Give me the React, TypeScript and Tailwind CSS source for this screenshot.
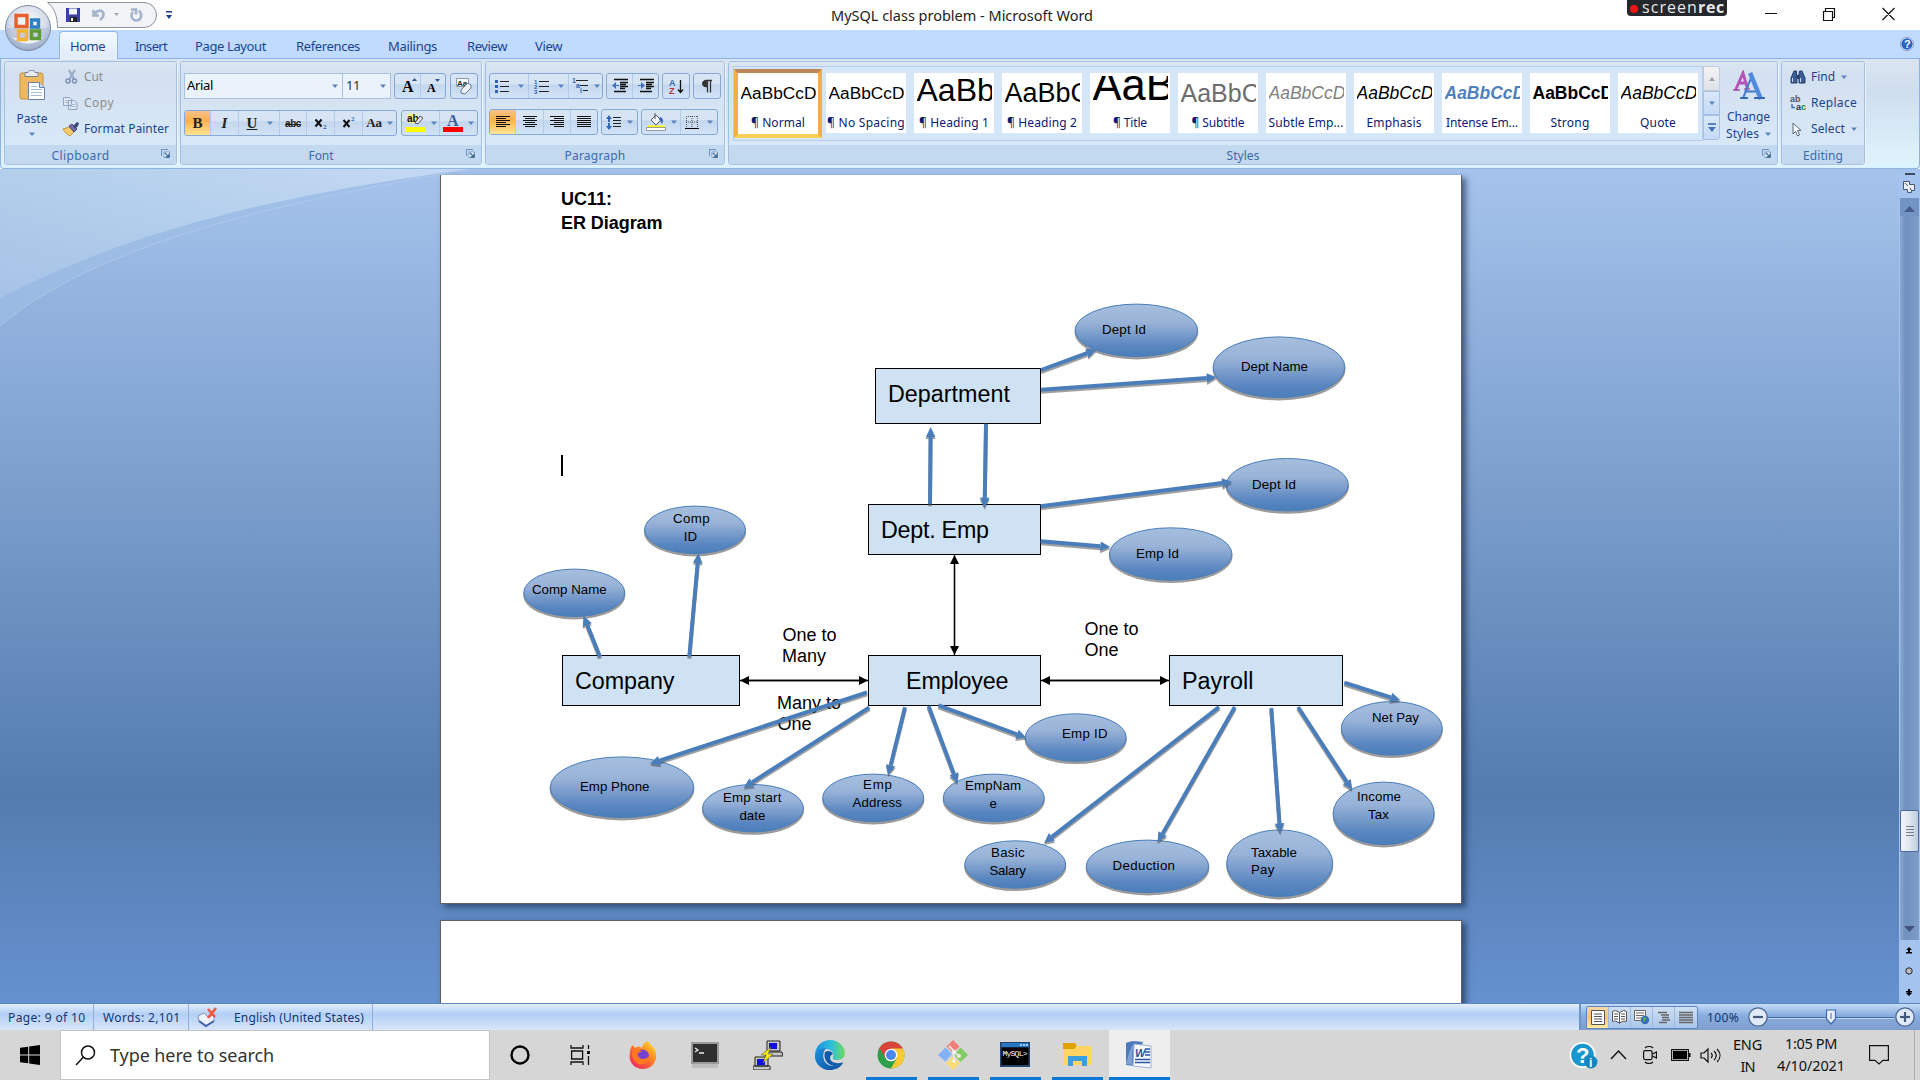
import React, { useLayoutEffect, useRef, useState } from "react";

/* Text whose tracking is tuned so that it takes the given width. */
function Fit({ w, children, className = "" }: { w: number; children: string; className?: string }) {
  const ref = useRef<HTMLSpanElement>(null);
  const [ls, setLs] = useState(0);
  useLayoutEffect(() => {
    const el = ref.current;
    if (el) setLs((w - el.getBoundingClientRect().width) / children.length);
  }, []);
  return (
    <span ref={ref} className={"inline-block whitespace-pre " + className} style={{ letterSpacing: ls + "px" }}>
      {children}
    </span>
  );
}

const Caret = ({ className = "" }: { className?: string }) => (
  <svg className={"shrink-0 " + className} width="6" height="4" viewBox="0 0 6 4">
    <path d="M0 0.5h6L3 4z" fill="#5a84bd" />
  </svg>
);

const Launcher = () => (
  <svg width="9" height="9" viewBox="0 0 9 9" fill="none">
    <path d="M0.5 7V0.5H7" stroke="#6a8fc0" />
    <path d="M3 3h5.5v5.5H3z" fill="#fff" stroke="#7f9fc9" />
    <path d="M4 4l4 4M8 4.500V8H4.500" stroke="#3d6797" strokeWidth="1.300" />
  </svg>
);

function Group({ label, lw, className, launcher, children }: { label: string; lw: number; className: string; launcher?: boolean; children: React.ReactNode }) {
  return (
    <div className={"flex h-[104px] shrink-0 flex-col overflow-hidden rounded-[3px] border border-[#a3c0e0] shadow-[1px_1px_0_#eef5fc] " + className}>
      <div className="h-[84px] bg-gradient-to-b from-[#dce6f2] from-0% via-[#d3e0ef] via-15% to-[#d8e8f8]">{children}</div>
      <div className={"relative flex h-[19px] items-center justify-center bg-[#c2d9f0] pt-[3px] text-[12px] leading-none text-[#3e6aaa] " + (launcher ? "pr-[20px]" : "")}>
        <Fit w={lw}>{label}</Fit>
        {launcher && <div className="absolute top-[4px] right-[6px]"><Launcher /></div>}
      </div>
    </div>
  );
}

const Bar = ({ className, children }: { className: string; children: React.ReactNode }) => (
  <div className={"flex h-[26px] shrink-0 divide-x divide-[#b2cbea] overflow-hidden rounded-[3px] border border-[#86a9d6] bg-gradient-to-b from-[#d6e4f4] from-40% via-[#c4d7ee] via-45% to-[#d2e3f6] " + className}>
    {children}
  </div>
);
const Cell = ({ className, children }: { className: string; children: React.ReactNode }) => (
  <div className={"flex shrink-0 items-center justify-center gap-[5px] text-[#222] " + className}>{children}</div>
);

const Lines = ({ rows }: { rows: [number, number][] }) => (
  <svg width="16" height="15" viewBox="0 0 16 15">
    {rows.map(([a, b], i) => <path key={i} d={`M${a} ${1.5 + i * 2}H${b}`} stroke="#111" strokeWidth="1" />)}
  </svg>
);

const FontGroup = () => (
  <div className="flex flex-col gap-[11px] pt-[11px] pl-[3px]">
    <div className="flex">
      <div className="flex h-[26px] w-[159px] items-center justify-between border border-[#abc1de] bg-[#eaf2fb] pr-[4px] pl-[2px] text-[13px] text-black">
        <Fit w={26}>Arial</Fit><Caret />
      </div>
      <div className="flex h-[26px] w-[48px] items-center justify-between border border-l-0 border-[#abc1de] bg-[#eaf2fb] pr-[4px] pl-[3px] text-[13px] text-[#333]">
        <Fit w={14}>11</Fit><Caret />
      </div>
      <Bar className="ml-[3px] w-[52px]">
        <Cell className="w-[26px]"><svg width="20" height="18" viewBox="0 0 20 18"><text x="4" y="15" fontFamily="Liberation Serif" fontWeight="bold" fontSize="16">A</text><path d="M14 4h5L16.500 1z" fill="#2d5797" /></svg></Cell>
        <Cell className="w-[24px]"><svg width="18" height="18" viewBox="0 0 18 18"><text x="3" y="15" fontFamily="Liberation Serif" fontWeight="bold" fontSize="12">A</text><path d="M11 2h5L13.500 5z" fill="#2d5797" /></svg></Cell>
      </Bar>
      <Bar className="ml-[4px] w-[28px]">
        <Cell className="w-[26px]"><svg width="20" height="19" viewBox="0 0 20 19"><path d="M2.500 1.500h12v8h-12z" fill="#fff" stroke="#8a99b0" /><text x="3" y="8.500" fontFamily="Liberation Sans" fontWeight="bold" fontSize="8" fill="#222">Aa</text><path d="M7 13l7-7 3 2v3l-6 6-4-1z" fill="#eceff5" stroke="#66789a" /></svg></Cell>
      </Bar>
    </div>
    <div className="flex font-['Liberation_Serif',serif] text-[15px] font-bold">
      <Bar className="w-[213px]">
        <Cell className="w-[26px] bg-gradient-to-b from-[#f6c08a] via-[#fcaf4e] via-40% to-[#ffe490]">B</Cell>
        <Cell className="w-[28px] italic">I</Cell>
        <Cell className="w-[41px]"><span className="mr-[5px] ml-[2px] underline">U</span><Caret /></Cell>
        <Cell className="w-[27px]"><span className="font-['Liberation_Sans',sans-serif] text-[10px] tracking-[-0.4px] line-through">abc</span></Cell>
        <Cell className="w-[28px]"><svg width="15" height="16" viewBox="0 0 15 16"><path d="M2.500 4.500l6 7M8.500 4.500l-6 7" stroke="#111" strokeWidth="2" /><text x="10" y="14" fontSize="7" fontWeight="bold" fill="#2c62b8">2</text></svg></Cell>
        <Cell className="w-[28px]"><svg width="15" height="16" viewBox="0 0 15 16"><path d="M2.500 5l6 7M8.500 5l-6 7" stroke="#111" strokeWidth="2" /><text x="10" y="6" fontSize="7" fontWeight="bold" fill="#2c62b8">2</text></svg></Cell>
        <Cell className="w-[33px]"><span className="text-[13px] tracking-[-0.3px]">Aa</span><Caret /></Cell>
      </Bar>
      <Bar className="ml-[4px] w-[77px]">
        <Cell className="w-[38px]"><svg width="22" height="20" viewBox="0 0 22 20"><path d="M3 1h10v9H3z" fill="#f4f08a" /><text x="3" y="9" fontFamily="Liberation Sans" fontSize="10" fill="#111">ab</text><path d="M11 10l5-7 3 2-5 6z" fill="#dde5f0" stroke="#556" /><path d="M1 14h20v5H1z" fill="#ff0" /></svg><Caret /></Cell>
        <Cell className="w-[37px]"><svg width="20" height="20" viewBox="0 0 20 20"><text x="4" y="12.500" fontFamily="Liberation Serif" fontWeight="bold" fontSize="16" fill="#3a5f9f">A</text><path d="M0 14h20v5H0z" fill="#f00" /></svg><Caret /></Cell>
      </Bar>
    </div>
  </div>
);

const Indent = ({ flip }: { flip?: boolean }) => (
  <svg width="18" height="16" viewBox="0 0 18 16">
    <path d="M3 1.500h14M9 4.500h8M9 6.500h6M9 8.500h8M9 10.500h5M3 13.500h12" stroke="#111" strokeWidth="1.500" />
    <path d={flip ? "M1 7h3V4l4 3.500L4 11V8H1z" : "M8 7H5V4L1 7.500 5 11V8h3z"} fill="#3f6fc0" />
  </svg>
);

const ParagraphGroup = () => (
  <div className="flex flex-col gap-[10px] pt-[11px] pl-[3px]">
    <div className="flex">
      <Bar className="w-[114px]">
        <Cell className="w-[39px] gap-[8px]"><svg width="15" height="15" viewBox="0 0 15 15"><path d="M5 2.500h9M5 7.500h9M5 12.500h9" stroke="#222" /><path d="M0 1h3v3H0zM0 6h3v3H0zM0 11h3v3H0z" fill="#2f62b4" /></svg><Caret /></Cell>
        <Cell className="w-[40px] gap-[9px]"><svg width="15" height="15" viewBox="0 0 15 15"><path d="M5 2.500h10M5 7.500h10M5 12.500h10" stroke="#222" /><text fontFamily="Liberation Sans" fontWeight="bold" fontSize="6" fill="#2f62b4"><tspan x="0" y="4.500">1</tspan><tspan x="0" y="10">2</tspan><tspan x="0" y="15">3</tspan></text></svg><Caret /></Cell>
        <Cell className="w-[33px]"><svg width="17" height="16" viewBox="0 0 17 16"><path d="M4 2.500h12M8 7.500h8M11 12.500h5" stroke="#222" /><text fontFamily="Liberation Sans" fontWeight="bold" fontSize="7" fill="#2f62b4"><tspan x="0" y="5">1</tspan><tspan x="4" y="10">a</tspan><tspan x="8" y="15">i</tspan></text></svg><Caret /></Cell>
      </Bar>
      <Bar className="ml-[3px] w-[53px]"><Cell className="w-[26px]"><Indent /></Cell><Cell className="w-[25px]"><Indent flip /></Cell></Bar>
      <Bar className="ml-[3px] w-[28px]"><Cell className="w-[26px]"><svg width="17" height="17" viewBox="0 0 17 17"><text fontFamily="Liberation Sans" fontWeight="bold" fontSize="9"><tspan x="1" y="8" fill="#3b6ab5">A</tspan><tspan x="1" y="16" fill="#b3393c">Z</tspan></text><path d="M12.500 2v12M10 11.500l2.500 3 2.500-3" stroke="#111" fill="none" strokeWidth="1.300" /></svg></Cell></Bar>
      <Bar className="ml-[3px] w-[28px]"><Cell className="w-[26px]"><svg width="12" height="15" viewBox="0 0 12 15"><path d="M11 1.500H5a3 3 0 0 0 0 6h1M6.500 1.500v12M9.500 1.500v12" stroke="#333" fill="none" strokeWidth="1.300" /><circle cx="4" cy="4.500" r="2.800" fill="#333" /></svg></Cell></Bar>
    </div>
    <div className="flex">
      <Bar className="w-[109px]">
        <Cell className="w-[26px] bg-gradient-to-b from-[#f6c08a] via-[#fcaf4e] via-40% to-[#ffe490]"><Lines rows={[[1, 15], [1, 11], [1, 15], [1, 11], [1, 15], [1, 11]]} /></Cell>
        <Cell className="w-[28px]"><Lines rows={[[1, 15], [3, 13], [1, 15], [3, 13], [1, 15], [3, 13]]} /></Cell>
        <Cell className="w-[27px]"><Lines rows={[[1, 15], [5, 15], [1, 15], [5, 15], [1, 15], [5, 15]]} /></Cell>
        <Cell className="w-[26px]"><Lines rows={[[1, 15], [1, 15], [1, 15], [1, 15], [1, 15], [1, 15]]} /></Cell>
      </Bar>
      <Bar className="ml-[3px] w-[37px]"><Cell className="w-[35px]"><svg width="16" height="17" viewBox="0 0 16 17"><path d="M7 3.500h8M7 6.500h8M7 9.500h8M7 12.500h8" stroke="#222" /><path d="M3 1L0 5h2v3h2V5h2zM3 16l3-4H4V9H2v3H0z" fill="#3565b5" /></svg><Caret /></Cell></Bar>
      <Bar className="ml-[3px] w-[77px]">
        <Cell className="w-[39px]"><svg width="20" height="19" viewBox="0 0 20 19"><path d="M5 7l5-5 5 5-5 5z" fill="#f4f6fa" stroke="#556" /><path d="M9 0v6" stroke="#556" /><path d="M14 4c3 1 4 4 2 7-1-2-1-3-3-4z" fill="#3565b5" /><path d="M2 12.500h17v1.500H2z" fill="#ff0" /><path d="M0.500 14.500h19v3h-19z" fill="#fff" stroke="#9a9a9a" /></svg><Caret /></Cell>
        <Cell className="w-[36px] gap-[8px]"><svg width="14" height="15" viewBox="0 0 14 15"><path d="M1 1.500h12M1 7h12M1.500 1v12M7 1v12M12.500 1v12" stroke="#555" strokeDasharray="1 1" /><path d="M0 13.500h14" stroke="#000" strokeWidth="1.200" /></svg><Caret /></Cell>
      </Bar>
    </div>
  </div>
);

const styleCards: { label: string; w: number; cls: string }[] = [
  { label: "¶ Normal", w: 54, cls: "text-[17.3px] top-[1px] text-black" },
  { label: "¶ No Spacing", w: 78, cls: "text-[17.3px] top-[1px] text-black" },
  { label: "¶ Heading 1", w: 70, cls: "text-[32px] top-[-2px] text-black" },
  { label: "¶ Heading 2", w: 70, cls: "text-[27px] top-[1px] text-black" },
  { label: "¶ Title", w: 34, cls: "text-[43.5px] top-[-7px] text-black" },
  { label: "¶ Subtitle", w: 53, cls: "text-[25px] top-[1px] text-[#6d6d6d]" },
  { label: "Subtle Emp...", w: 75, cls: "text-[17.5px] top-[1px] italic text-[#808080]" },
  { label: "Emphasis", w: 55, cls: "text-[17.5px] top-[1px] italic text-black" },
  { label: "Intense Em...", w: 72, cls: "text-[17.5px] top-[1px] italic font-bold text-[#4f81bd]" },
  { label: "Strong", w: 39, cls: "text-[17.5px] top-[1px] font-bold text-black" },
  { label: "Quote", w: 36, cls: "text-[17.5px] top-[1px] italic text-black" },
];

const StylesGroup = () => (
  <div className="flex pt-[4px] pl-[4px]">
    <div className="flex h-[75px] w-[970px] border border-[#b5cdee] bg-[#d4e6f8]">
      {styleCards.map((c, i) => (
        <div key={c.label} className={i === 0 ? "mt-[2px] h-[69px] w-[88px] shrink-0 rounded-[1px] border-4 border-t-[#bd8657] border-r-[#f3ad4e] border-b-[#fbcf55] border-l-[#f3ad4e] bg-white p-0" : "h-[73px] w-[88px] shrink-0 px-[4px] pt-[6px]"}>
          <div className="flex h-[60px] flex-col items-center bg-white">
            <div className="relative mt-[3px] h-[36px] w-[75px] shrink-0 overflow-hidden font-['Liberation_Sans',sans-serif]">
              <span className={"absolute left-0 leading-[33px] whitespace-nowrap " + c.cls}>AaBbCcDd</span>
            </div>
            <div className="mt-[2px] text-[12px] leading-[17px] whitespace-nowrap text-[#0b1a78]"><Fit w={c.w}>{c.label}</Fit></div>
          </div>
        </div>
      ))}
    </div>
    <div className="flex h-[74px] w-[17px] flex-col">
      <div className="flex h-[25px] items-center justify-center rounded-tr-[3px] border border-[#c3cddb] bg-gradient-to-b from-[#f4f4f4] to-[#dde1e8]"><svg width="6" height="4"><path d="M0 4h6L3 0z" fill="#a2a2a2" /></svg></div>
      <div className="flex h-[24px] items-center justify-center border border-[#a6c0e4] bg-gradient-to-b from-[#dae8fa] to-[#c5daf6]"><Caret /></div>
      <div className="flex h-[25px] flex-col items-center justify-center gap-[2px] rounded-br-[3px] border border-[#a6c0e4] bg-gradient-to-b from-[#dae8fa] to-[#c5daf6]"><div className="h-[2px] w-[8px] bg-[#5a84bd]" /><svg width="8" height="5"><path d="M0 0h8L4 5z" fill="#4474b8" /></svg></div>
    </div>
    <div className="flex w-[57px] flex-col items-center pt-[4px] text-[12px] leading-[17px] text-[#1c448e]">
      <svg width="32" height="30" viewBox="0 0 32 30" fill="none" strokeLinecap="square">
        <path d="M3 19L10 3l4 14M6 13h7" stroke="#b552b5" strokeWidth="2.800" />
        <path d="M1 20h5M12 19h4" stroke="#a045a5" strokeWidth="1.600" />
        <path d="M10.500 27L18 8M12.500 21.500h11" stroke="#4079c8" strokeWidth="2" />
        <path d="M18 5l9 22" stroke="#4f8bdc" strokeWidth="4.500" />
        <path d="M8 28h6M22 28h9" stroke="#3468b4" strokeWidth="1.800" />
      </svg>
      <div className="mt-[8px]"><Fit w={43}>Change</Fit></div>
      <div className="flex items-center gap-[6px]"><Fit w={33}>Styles</Fit><Caret /></div>
    </div>
  </div>
);

const ClipboardGroup = () => (
  <div className="flex text-[12px] text-[#1c448e]">
    <div className="flex w-[54px] flex-col items-center pt-[8px]">
      <svg width="27" height="31" viewBox="0 0 27 31">
        <rect x="1" y="3" width="23" height="26" rx="2" fill="#eeb85e" stroke="#c8913f" />
        <path d="M6 2.500h3c0-3 7-3 7 0h3v4H6z" fill="#e6e9ee" stroke="#7c838f" />
        <path d="M9.500 12.500h11l5 5v12h-16z" fill="#fff" stroke="#6b83aa" />
        <path d="M20.500 12.500v5h5" fill="#cfdcf0" stroke="#6b83aa" />
        <path d="M12 16.500h6M12 19.500h11M12 22.500h11M12 25.500h11" stroke="#a8bad6" />
      </svg>
      <div className="mt-[9px] leading-[17px]"><Fit w={31}>Paste</Fit></div>
      <Caret className="mt-[5px]" />
    </div>
    <div className="flex flex-col pt-[2px] pl-[3px] leading-[26px]">
      <div className="flex h-[26px] items-center text-[#8d8d8d]">
        <svg className="mr-[5px] ml-[3px]" width="14" height="16" viewBox="0 0 14 16"><path d="M4 1l5 9M10 1L4.500 10" stroke="#93a6c4" strokeWidth="2" /><circle cx="3" cy="12" r="2" fill="none" stroke="#7d93b5" strokeWidth="1.500" /><circle cx="9.500" cy="12" r="2" fill="none" stroke="#7d93b5" strokeWidth="1.500" /></svg>
        <Fit w={19}>Cut</Fit>
      </div>
      <div className="flex h-[26px] items-center text-[#8d8d8d]">
        <svg className="mr-[6px]" width="16" height="14" viewBox="0 0 16 14"><path d="M1.500 1.500h6l2 2v6h-8zM6.500 4.500h6l2.500 2.500v6.500H6.500z" fill="#dfe6f0" stroke="#8fa3c2" /><path d="M3 4.500h3M3 6.500h3M8.500 8.500h5M8.500 10.500h5" stroke="#a9b9d2" /></svg>
        <Fit w={30}>Copy</Fit>
      </div>
      <div className="flex h-[26px] items-center">
        <svg className="mr-[4px]" width="18" height="16" viewBox="0 0 18 16"><path d="M1 8l6-2 5 5-4 4c-2-1-5-3-7-7z" fill="#f1ca6c" stroke="#b98d35" strokeWidth="0.800" /><path d="M7 5l3-2 5 5-3 3z" fill="#7a6fae" stroke="#4a4478" /><path d="M11 5l4-4 2 1-1 3-3 3z" fill="#3b4878" /></svg>
        <Fit w={85}>Format Painter</Fit>
      </div>
    </div>
  </div>
);

const EditingGroup = () => (
  <div className="flex flex-col pt-[2px] pl-[8px] text-[12px] text-[#1c448e]">
    <div className="flex h-[26px] items-center">
      <svg className="mr-[5px]" width="16" height="14" viewBox="0 0 16 14"><path d="M4 1h2.500v3L7 13H1V8zM9.500 1H12l3 7v5H9V4z" fill="#3e5f95" stroke="#22406f" /><path d="M7 5h2v4H7z" fill="#22406f" /><path d="M2.500 8v4M10.500 8v4" stroke="#c8d8f0" /></svg>
      <Fit w={24}>Find</Fit><Caret className="ml-[6px]" />
    </div>
    <div className="flex h-[26px] items-center">
      <svg className="mr-[5px]" width="16" height="16" viewBox="0 0 16 16" fontFamily="Liberation Sans" fontWeight="bold"><text x="0" y="7" fontSize="9" fill="#555">ab</text><text x="6" y="15" fontSize="9" fill="#1b8a22"><tspan fill="#333">a</tspan>c</text><path d="M2 9v3.500h3" stroke="#3565b5" fill="none" strokeWidth="1.300" /></svg>
      <Fit w={46}>Replace</Fit>
    </div>
    <div className="flex h-[26px] items-center">
      <svg className="mr-[9px] ml-[2px]" width="10" height="15" viewBox="0 0 10 15"><path d="M1 1v11l2.500-2.500L5.500 14l2-1-2-4.500H9z" fill="#fff" stroke="#55637c" /></svg>
      <Fit w={34}>Select</Fit><Caret className="ml-[6px]" />
    </div>
  </div>
);

const tabs: [string, number, string][] = [
  ["Insert", 32, "w-[60px]"], ["Page Layout", 71, "w-[101px]"], ["References", 64, "w-[92px]"],
  ["Mailings", 49, "w-[79px]"], ["Review", 40, "w-[68px]"], ["View", 27, "w-[46px]"],
];

type Pt = [number, number, number, number];
const ellipses: Pt[] = [
  [1136.4, 330.3, 61.8, 26.7], [1279, 367.2, 66.4, 30.8], [1287.3, 484.7, 61.6, 26.7], [1170.7, 554, 61.8, 26.7],
  [695, 529.8, 51, 24.2], [574.3, 592.8, 51, 24.2], [622, 787.2, 72.3, 30.8], [753, 808.2, 51, 24.2],
  [873.2, 797.8, 51, 24.2], [993.8, 797.8, 51, 24.2], [1075.7, 737.5, 51, 24.2], [1015.2, 864.5, 51, 24.2],
  [1147.5, 866.3, 61.8, 26.7], [1279.7, 863.2, 53.5, 33.8], [1383.7, 813.3, 51, 31.7], [1391.8, 728.3, 51, 27.3],
];
const arrows: Pt[] = [
  [1041, 370, 1096.4, 349.7], [1041, 389.7, 1216.8, 377.3], [930, 504.3, 930.7, 427], [986, 423.7, 984.6, 507.7],
  [1040.7, 506.3, 1232.1, 481.7], [1040.7, 541.3, 1110.4, 547], [600, 656.7, 583.6, 615.7], [689.3, 656.7, 698.6, 553],
  [867, 692.3, 650, 763.7], [869.3, 707.3, 743.6, 787.7], [905, 707.3, 888.2, 775], [928.6, 706, 957.5, 783.3],
  [938.6, 705.3, 1026.4, 737.7], [1219, 707, 1044, 843], [1234.8, 707, 1157.6, 842.3], [1271.3, 708, 1280.2, 833.3],
  [1298.1, 707, 1352.2, 790], [1344.3, 682.7, 1400.4, 700.3],
];
const links: Pt[] = [[954.5, 555, 954.5, 655], [740, 680.5, 868, 680.5], [1041, 680.5, 1169, 680.5]];
const boxes: Pt[] = [
  [875.5, 368.5, 165, 55], [868.5, 504.5, 172, 50], [562.5, 655.5, 177, 50], [868.5, 655.5, 172, 50], [1169.5, 655.5, 173, 50],
];
type Label = [string, number, number, number];
const bigLabels: Label[] = [
  ["Department", 888, 402, 122], ["Dept. Emp", 881, 538, 108], ["Company", 575, 689, 99.5], ["Employee", 906, 689, 102.5], ["Payroll", 1182, 689, 71.5],
];
const midLabels: Label[] = [
  ["One to", 782.4, 641, 54], ["Many", 782, 661.7, 44], ["Many to", 777, 709, 64], ["One", 777.4, 730, 34],
  ["One to", 1084.4, 635, 54], ["One", 1084.4, 656, 34],
];
const smallLabels: Label[] = [
  ["Dept Id", 1102, 334, 44], ["Dept Name", 1241, 371, 67], ["Dept Id", 1252, 489, 44], ["Emp Id", 1136, 558, 43],
  ["Comp", 673, 523, 36.6], ["ID", 683.7, 541, 13.5], ["Comp Name", 532, 594, 74.6], ["Emp Phone", 580, 791, 69.5],
  ["Emp start", 723, 802, 58.4], ["date", 739.4, 820, 26], ["Emp", 863, 789, 29], ["Address", 852.4, 807, 49.6],
  ["EmpNam", 965, 790, 56], ["e", 989.6, 808, 7.4], ["Emp ID", 1062, 738, 45.6], ["Basic", 991, 857, 33.6],
  ["Salary", 989.4, 875, 36.6], ["Deduction", 1112.6, 870, 62.4], ["Taxable", 1251, 857, 46], ["Pay", 1251, 874, 23.3],
  ["Income", 1357, 801, 44], ["Tax", 1368, 819, 21], ["Net Pay", 1372, 722, 47],
];

function Arrow({ p, head, half, width }: { p: Pt; head: number; half: number; width: number }) {
  const [x1, y1, x2, y2] = p;
  const len = Math.hypot(x2 - x1, y2 - y1);
  const ux = (x2 - x1) / len, uy = (y2 - y1) / len;
  const bx = x2 - ux * head, by = y2 - uy * head;
  return (
    <g>
      <line x1={x1} y1={y1} x2={bx} y2={by} stroke="currentColor" strokeWidth={width} />
      <polygon points={`${x2},${y2} ${bx - uy * half},${by + ux * half} ${bx + uy * half},${by - ux * half}`} fill="currentColor" />
    </g>
  );
}

const Labels = ({ items, size }: { items: Label[]; size: number }) => (
  <g fontSize={size} fill="#000">
    {items.map(([t, x, y, w], i) => <text key={i} x={x} y={y} textLength={w}>{t}</text>)}
  </g>
);

const Diagram = () => (
  <svg className="absolute top-0 left-0 font-['Liberation_Sans',sans-serif]" width="1021" height="728" viewBox="441 175 1021 728">
    <defs>
      <linearGradient id="oval" x1="0" y1="0" x2="0" y2="1">
        <stop offset="0" stopColor="#a6bfde" /><stop offset="0.350" stopColor="#99b3d8" /><stop offset="0.800" stopColor="#5a86c0" /><stop offset="1" stopColor="#4a7ebb" />
      </linearGradient>
    </defs>
    {boxes.map(([x, y, w, h], i) => <rect key={i} x={x} y={y} width={w} height={h} fill="#cfe2f3" stroke="#000" />)}
    <Labels items={bigLabels} size={23.3} />
    <Labels items={midLabels} size={18} />
    <g className="text-black">
      {links.map((p, i) => (
        <g key={i}><Arrow p={p} head={9} half={4.500} width={1.300} /><Arrow p={[p[2], p[3], p[0], p[1]]} head={9} half={4.500} width={1.300} /></g>
      ))}
    </g>
    {ellipses.map(([cx, cy, rx, ry], i) => (
      <g key={i}>
        <ellipse cx={cx} cy={cy + 2.400} rx={rx} ry={ry} fill="#7a7a7a" opacity="0.750" />
        <ellipse cx={cx} cy={cy} rx={rx - 0.500} ry={ry - 0.500} fill="url(#oval)" stroke="#4a7ebb" />
      </g>
    ))}
    <g className="text-[#444]" opacity="0.500" transform="translate(0 2)">{arrows.map((p, i) => <Arrow key={i} p={p} head={10} half={5} width={4} />)}</g>
    <g className="text-[#4a7ebb]">{arrows.map((p, i) => <Arrow key={i} p={p} head={10} half={4.800} width={3.900} />)}</g>
    <Labels items={smallLabels} size={13.3} />
  </svg>
);

const DocArea = () => (
  <div className="relative flex h-[834px] overflow-hidden bg-gradient-to-b from-[#a5c3ec] from-0% via-[#547caf] via-75% to-[#6591cf] to-100%">
    <svg className="absolute top-0 left-0" width="480" height="170" viewBox="0 169 480 170">
      <defs><linearGradient id="swoosh" x1="0" y1="1" x2="1" y2="0"><stop offset="0" stopColor="#a6c2e6" /><stop offset="0.500" stopColor="#b3cfec" /><stop offset="1" stopColor="#c6d9f4" /></linearGradient></defs>
      <path d="M0 326C90 249 260 205 470 169H0z" fill="#a0c0e6" opacity="0.550" />
      <path d="M0 326C90 249 260 205 470 169" fill="none" stroke="#b5cfee" opacity="0.600" />
      <path d="M0 298C140 225 300 192 470 169H0z" fill="url(#swoosh)" />
    </svg>
    <div className="relative flex flex-1 flex-col gap-[16px] pt-[6px] pl-[440px]">
      <div className="relative h-[729px] w-[1022px] shrink-0 border-r border-b border-l border-[#5d6066] bg-white shadow-[4px_3px_6px_rgba(20,35,70,0.6)]">
        <div className="flex flex-col pt-[12px] pl-[120px] font-['Liberation_Sans',sans-serif] text-[18px] leading-[24px] font-bold text-black">
          <Fit w={51} className="self-start">UC11:</Fit>
          <Fit w={101.500} className="self-start">ER Diagram</Fit>
        </div>
        <div className="mt-[220px] ml-[120px] h-[21px] w-[2px] bg-black" />
        <Diagram />
      </div>
      <div className="h-[100px] w-[1022px] shrink-0 border border-[#5d6066] bg-white shadow-[4px_3px_6px_rgba(20,35,70,0.6)]" />
    </div>
    <div className="relative flex w-[21px] flex-col items-center bg-[#a5c3ef]">
      <div className="mt-[4px] h-[2px] w-[10px] bg-[#3c4a63]" />
      <svg className="mt-[5px] mr-[2px]" width="14" height="14" viewBox="0 0 14 14"><path d="M1.500 1.500h6v3h5v6h-3v2h-4v-3h-4z" fill="#e9edf4" stroke="#4c5870" /><path d="M3 3l3 3M8 8l2 3" stroke="#4c5870" /></svg>
      <div className="mt-[4px] flex h-[742px] w-[19px] flex-col items-center bg-gradient-to-r from-[#8aa8d0] via-[#7090be] via-30% to-[#7e9dc8]">
        <div className="flex h-[18px] w-full items-center justify-center bg-[#7294c4]"><svg className="mt-[4px]" width="11" height="6"><path d="M0 6h11L5.500 0z" fill="#4a5a86" /></svg></div>
        <div className="mt-[594px] flex h-[42px] w-[19px] flex-col items-center justify-center gap-[2px] rounded-[2px] border border-[#50689c] bg-gradient-to-r from-[#f0f4fa] via-[#e3e8ee] via-45% to-[#bccddf]">
          {[0, 1, 2, 3].map((i) => <div key={i} className="h-px w-[8px] bg-[#777f88]" />)}
        </div>
        <svg className="mt-[74px]" width="11" height="6"><path d="M0 0h11L5.500 6z" fill="#45527e" /></svg>
      </div>
      <svg className="mt-[7px] mr-[2px]" width="8" height="50" viewBox="-1 0 8 50"><path d="M0 3h6L3 0zM2 3h2v2H2zM0 5h6v1.500H0zM0 44h6v1.500H0zM2 42h2v5H2zM0 46h6L3 49z" fill="#000" /><circle cx="3" cy="24" r="3.200" fill="#bbb" stroke="#222" /></svg>
    </div>
  </div>
);

const StatusBar = () => (
  <div className="flex h-[27px] items-stretch border-t border-[#5b87bd] bg-gradient-to-b from-[#e3eefd] from-0% via-[#b3cff5] via-40% to-[#d8e6fa] text-[12px] text-[#15356e]">
    <div className="flex w-[94px] items-center border-r border-[#8fb0dc] pt-[2px] pl-[8px]"><Fit w={77.500}>Page: 9 of 10</Fit></div>
    <div className="flex w-[95px] items-center border-r border-[#8fb0dc] pt-[2px] pl-[9px]"><Fit w={77.500}>Words: 2,101</Fit></div>
    <div className="flex w-[184px] items-center border-r border-[#8fb0dc] pl-[8px]">
      <svg width="21" height="20" viewBox="0 0 21 20"><path d="M1 9l6-3 4 4 6-2v6l-8 5-7-5z" fill="#eef2fa" stroke="#7f92b8" /><path d="M2 14l7 5 8-5" stroke="#3f5fae" strokeWidth="2" fill="none" /><path d="M11 2l7 8M19 1l-8 10" stroke="#ee5a42" strokeWidth="2.600" /></svg>
      <Fit w={130} className="mt-[2px] ml-[16px]">English (United States)</Fit>
    </div>
    <div className="flex-1" />
    <div className="flex w-[341px] items-center border-l-2 border-[#6c94c9] bg-gradient-to-b from-[#c6dcf8] from-0% via-[#87acde] via-45% to-[#7f9fcd]">
      <div className="ml-[5px] flex h-[23px] w-[112px] divide-x divide-[#9db9de] overflow-hidden rounded-[2px] border border-[#5e86bd] bg-gradient-to-b from-[#cfdff3] to-[#aac6ea]">
        <div className="flex w-[22px] items-center justify-center bg-gradient-to-b from-[#f3d7a9] via-[#fbc865] to-[#ffe9a0]"><svg width="14" height="15" viewBox="0 0 14 15"><path d="M0.500 0.500h13v14H0.500z" fill="#fff" stroke="#555" /><path d="M3 4h8M3 6.500h8M3 9h8M3 11.500h8" stroke="#555" /></svg></div>
        <div className="flex w-[22px] items-center justify-center"><svg width="15" height="14" viewBox="0 0 15 14"><path d="M0.500 1.500l3-1 4 2 4-2 3 1v10l-3-.5-4 2-4-2-3 .5z" fill="#fff" stroke="#555" /><path d="M7.500 2.500v11M2 4h4M2 6.500h4M2 9h4M9 4h4M9 6.500h4M9 9h4" stroke="#555" /></svg></div>
        <div className="flex w-[22px] items-center justify-center"><svg width="16" height="15" viewBox="0 0 16 15"><path d="M0.500 0.500h11v10H0.500z" fill="#fff" stroke="#666" /><path d="M2 3h8M2 5.500h8M2 8h6" stroke="#666" /><circle cx="11" cy="10" r="4.200" fill="#356fb5" /><path d="M9 8c2-2 4 0 3 2s-3 1-3 3" fill="#53a860" /></svg></div>
        <div className="flex w-[22px] items-center justify-center"><svg width="14" height="13" viewBox="0 0 14 13"><path d="M1 1.500h9M4 4h8M5 6.500h7M5 9h8M2 11.500h8" stroke="#666" strokeWidth="1.300" /></svg></div>
        <div className="flex w-[22px] items-center justify-center"><svg width="14" height="13" viewBox="0 0 14 13"><path d="M0 1.500h14M0 4h14M0 6.500h14M0 9h14M0 11.500h14" stroke="#666" strokeWidth="1.300" /></svg></div>
      </div>
      <Fit w={32} className="mt-[2px] ml-[9px]">100%</Fit>
      <svg className="ml-[8px]" width="170" height="24" viewBox="1747 0 170 24">
        <path d="M1768 12.500h126" stroke="#3f68a8" /><path d="M1768 13.500h126" stroke="#c3d7f2" />
        {[1758, 1905].map((c) => <g key={c}><circle cx={c} cy="12" r="9.200" fill="#dfe9f7" stroke="#4b6795" strokeWidth="1.300" /><path d={`M${c - 5} 12h10`} stroke="#445878" strokeWidth="2.200" /></g>)}
        <path d="M1905 7v10" stroke="#445878" strokeWidth="2.200" />
        <path d="M1826.500 5h9v9l-4.500 5-4.500-5z" fill="#e6effb" stroke="#3f68a8" strokeWidth="1.200" /><path d="M1831 8v6" stroke="#3f68a8" />
      </svg>
    </div>
  </div>
);

const TaskIcon = ({ className, running, active, children }: { className: string; running?: boolean; active?: boolean; children: React.ReactNode }) => (
  <div className={"flex h-[50px] shrink-0 flex-col items-center " + (active ? "bg-[#eeeeee] " : "") + className}>
    <div className="flex h-[47px] items-center justify-center pt-[2px]">{children}</div>
    {running && <div className={"h-[3px] bg-[#0a78d4] " + (active ? "w-full" : "w-[51px]")} />}
  </div>
);

const Taskbar = () => (
  <div className="flex h-[50px] items-stretch bg-[#d6d6d6] text-black">
    <div className="flex w-[60px] items-center justify-center"><svg width="20" height="20" viewBox="0 0 20 20"><path d="M0 2.800L8.200 1.700V9.500H0zM9.200 1.500L20 0v9.500H9.200zM0 10.500h8.200v7.800L0 17.200zM9.200 10.500H20V20L9.200 18.500z" /></svg></div>
    <div className="flex w-[430px] items-center border border-[#c4c4c4] bg-white pl-[14px]">
      <svg width="21" height="21" viewBox="0 0 21 21" fill="none" stroke="#111" strokeWidth="1.500"><circle cx="13" cy="7.500" r="6.500" /><path d="M8.500 12L1 20" /></svg>
      <Fit w={164} className="ml-[14px] text-[18px] text-[#333]">Type here to search</Fit>
    </div>
    <TaskIcon className="w-[60px]"><svg width="22" height="22"><circle cx="11" cy="11" r="8.500" fill="none" stroke="#000" strokeWidth="2.400" /></svg></TaskIcon>
    <TaskIcon className="w-[60px]"><svg width="21" height="20" viewBox="0 0 21 20" fill="none" stroke="#111" strokeWidth="1.300"><path d="M1 0v3h12V0M1.600 6h11v8h-11zM1 20v-3h12v3M18.500 0v4M18.500 11v9" /><path d="M17 6h3v3h-3z" fill="#111" stroke="none" /></svg></TaskIcon>
    <TaskIcon className="w-[65px]"><svg width="30" height="30" viewBox="0 0 30 30"><defs><linearGradient id="ff" x1="1" y1="0" x2="0.200" y2="1"><stop offset="0" stopColor="#ffe63a" /><stop offset="0.450" stopColor="#ff8a1f" /><stop offset="1" stopColor="#f0265f" /></linearGradient></defs><path d="M20 1c1 3 5 5 7 9 4 9-2 19-12 19S0 21 2 12c0-3 1-5 3-7l2 3c3-2 5-2 7 0 0-3 3-6 6-7z" fill="url(#ff)" /><circle cx="14.500" cy="16" r="6.500" fill="#7542cf" /><path d="M5 10c3-1 7-1 9 2-4 0-5 2-4 4 2 4 8 4 11 0 0 6-5 9-10 8-5-2-8-8-6-14z" fill="#ff7a1f" /></svg></TaskIcon>
    <TaskIcon className="w-[60px]"><svg width="28" height="26" viewBox="0 0 28 26"><path d="M0 0h28v22H0z" fill="#9b9b9b" /><path d="M2 2h24v18H2z" fill="#2f2f2f" /><path d="M1 22h26v4H1z" fill="#bdbdbd" /><path d="M4 6l3 2-3 2M8 11h5" stroke="#eee" fill="none" strokeWidth="1.300" /></svg></TaskIcon>
    <TaskIcon className="w-[65px]"><svg width="30" height="30" viewBox="0 0 30 30"><path d="M14 1h13v10H14zM12 12h17l1 4H12zM2 17h13v9H2zM0 26h17v4H0z" fill="#c8c8c8" stroke="#222" /><path d="M16 3h8v6h-8zM4 19h8v6H4z" fill="#1010d8" /><path d="M18 7L8 15h5l-3 8 10-9h-5z" fill="#ffee00" stroke="#555" strokeWidth="0.600" /></svg></TaskIcon>
    <TaskIcon className="w-[60px]"><svg width="30" height="30" viewBox="0 0 30 30"><defs><linearGradient id="eg" x1="0" x2="1"><stop offset="0" stopColor="#1a8fe0" /><stop offset="0.550" stopColor="#2dc0dc" /><stop offset="1" stopColor="#6fdc5a" /></linearGradient><linearGradient id="eb" x1="0" y1="0" x2="1" y2="1"><stop offset="0" stopColor="#1b90dd" /><stop offset="1" stopColor="#0d4f9e" /></linearGradient></defs><path d="M0 14C1 5 8 0 15 0c9 0 15 7 15 13 0 5-4 7-8 7-3 0-5-1-4-3 2-4-2-8-7-8-6 0-10 3-11 5z" fill="url(#eg)" /><path d="M0 14c2-4 6-6 11-6-3 4-4 9-1 14 3 4 8 5 13 3 2-1 4-3 5-2-3 5-8 7-13 7C6 30-1 23 0 14z" fill="url(#eb)" /><path d="M10 12c-2 6 2 13 9 14 3 0 7-2 9-4-6 3-13 0-13-4 0-2 1-3 3-4-1-3-5-4-8-2z" fill="#0f5aa8" /></svg></TaskIcon>
    <TaskIcon running className="w-[62px]"><svg width="28" height="28" viewBox="0 0 28 28"><circle cx="14" cy="14" r="13.500" fill="#2ea04a" /><path d="M14 14L2.300 7.300A13.500 13.500 0 0 1 25.700 7.300z" fill="#d8453a" /><path d="M14 7.500h12A13.500 13.500 0 0 1 14 27.500l5.600-10z" fill="#fcc934" /><path d="M2.300 7.300L9 18l5-11z" fill="#d8453a" /><circle cx="14" cy="14" r="6.300" fill="#fff" /><circle cx="14" cy="14" r="5" fill="#4a88ee" /></svg></TaskIcon>
    <TaskIcon running className="w-[62px]"><svg width="30" height="30" viewBox="0 0 30 30"><path d="M15 0l6.500 6.500-6.500 6.500-6.500-6.500z" fill="#f17e78" /><path d="M7.500 7.500L14 14l-6.500 7.500L0 15z" fill="#84b0f8" /><path d="M22.500 7.500L30 15l-7.500 7L16 15z" fill="#84cb62" /><path d="M15 16.500l7 6.500-7 7-7-7z" fill="#fadc77" /><path d="M11 6l5 5v11M16 12l5 4" stroke="#e6e6e6" strokeWidth="1.800" fill="none" /><circle cx="16" cy="12" r="2.200" fill="#eee" /><circle cx="21" cy="16" r="2" fill="#eee" /><circle cx="16" cy="21" r="2" fill="#eee" /></svg></TaskIcon>
    <TaskIcon running className="w-[62px]"><svg width="30" height="25" viewBox="0 0 30 25"><path d="M0 0h30v25H0z" fill="#24426c" /><path d="M1.500 1h27v4h-27z" fill="#2878c8" /><path d="M20 2h2v2h-2zM23 2h2v2h-2zM26 2h2v2h-2z" fill="#9cf" /><path d="M1.500 5.500h27v17.500h-27z" fill="#000" /><text x="2.500" y="14" textLength="25" fontFamily="Liberation Mono" fontSize="8" fill="#fff">MySQL&gt;</text></svg></TaskIcon>
    <TaskIcon running className="w-[62px]"><svg width="28" height="25" viewBox="0 0 28 25"><path d="M0 1h12l2 3h14v19H0z" fill="#ffd460" /><path d="M0 1h12l1.500 3-2 3H0z" fill="#e0a106" /><path d="M5 14h19v10h-5v-5h-9v5H5z" fill="#3f9ddd" /></svg></TaskIcon>
    <TaskIcon running active className="ml-[1px] w-[61px]"><svg width="30" height="30" viewBox="0 0 30 30"><path d="M1 3C5 1 10 1 18 2l-9 24-8-1z" fill="#4d78bb" /><path d="M9 4l17 2v22L8 26z" fill="#f6f9fd" stroke="#9bb0d0" /><path d="M1 24c3-10 4-18 9-21l-2 4c-1 6-1 12-1 18z" fill="#7fa2d6" /><text x="10" y="17" fontFamily="Liberation Sans" fontWeight="bold" fontStyle="italic" fontSize="11" fill="#2b569f">W</text><path d="M20 9h5M20 12h5M20 15h5M10 19.500h15M10 22.500h15" stroke="#2b569f" strokeWidth="1.400" /></svg></TaskIcon>
    <div className="flex-1" />
    <div className="flex items-center">
      <svg className="mt-[2px]" width="29" height="32" viewBox="0 0 29 32"><circle cx="13.500" cy="15" r="13" fill="#fff" /><circle cx="13.500" cy="15" r="11.300" fill="#1a96cf" /><text x="7" y="23" fontFamily="Liberation Sans" fontWeight="bold" fontSize="22" fill="#fff">?</text><circle cx="22" cy="22" r="6.500" fill="#1585bd" /><text x="20" y="26.500" fontFamily="Liberation Sans" fontWeight="bold" fontSize="12" fill="#fff">i</text></svg>
      <svg className="ml-[12px]" width="17" height="10" fill="none" stroke="#111" strokeWidth="1.400"><path d="M1 9l7.500-8L16 9" /></svg>
      <svg className="ml-[16px]" width="14" height="18" viewBox="0 0 14 18" fill="none" stroke="#111" strokeWidth="1.200"><rect x="0.600" y="4.600" width="8.500" height="9" rx="1.500" /><path d="M9.500 8l4-2v6l-4-2M2 2c2-2 6-2 8 0M2 16c2 2 6 2 8 0" /></svg>
      <svg className="ml-[14px]" width="20" height="12" viewBox="0 0 20 12"><path d="M0.600 0.600h16.800v10.800H0.600z" fill="none" stroke="#111" strokeWidth="1.100" /><path d="M2 2h14v8H2zM18 4h1.500v4H18z" fill="#000" /></svg>
      <svg className="ml-[9px]" width="21" height="17" viewBox="0 0 21 17" fill="none" stroke="#111" strokeWidth="1.200"><path d="M1 6h3l4-4v13l-4-4H1zM11 6c1.500 1.500 1.500 3.500 0 5M14 4c3 3 3 6 0 9M17 2c4 4 4 9 0 13" /></svg>
    </div>
    <div className="ml-[12px] flex flex-col items-center pt-[3px] text-[14.500px] leading-[22px] text-[#111]"><Fit w={29}>ENG</Fit><Fit w={14}>IN</Fit></div>
    <div className="ml-[15px] flex flex-col items-center pt-[2px] text-[14.500px] leading-[22px] text-[#111]"><Fit w={52}>1:05 PM</Fit><Fit w={68}>4/10/2021</Fit></div>
    <svg className="mt-[15px] ml-[24px]" width="20" height="20" viewBox="0 0 20 20" fill="none" stroke="#111" strokeWidth="1.200"><path d="M0.600 0.600h18.800v14.800h-5.500L10 19l-4-3.600H0.600z" /></svg>
    <div className="ml-[25px] w-[6px] border-l border-[#a9a9a9]" />
  </div>
);

const OfficeOrb = () => (
  <svg className="absolute top-[4px] left-[4px]" width="48" height="48" viewBox="0 0 48 48">
    <defs><radialGradient id="orb" cx="0.500" cy="0.350" r="0.650"><stop offset="0" stopColor="#fdfdff" /><stop offset="0.650" stopColor="#d3dae8" /><stop offset="1" stopColor="#94a3be" /></radialGradient></defs>
    <circle cx="24" cy="24" r="22.500" fill="url(#orb)" stroke="#7d8ba5" />
    <path d="M3 24a21 21 0 0 0 42 0z" fill="#a9b8d4" opacity="0.450" />
    <path d="M8 33a19 14 0 0 0 32 0c-8 3-24 3-32 0z" fill="#fff" opacity="0.800" />
    <g fill="none" strokeWidth="3.400"><path d="M12 11.500h11v11h-11z" stroke="#e8602a" /><path d="M27.500 16h7v7h-7z" stroke="#2f7fc4" /><path d="M14.500 27h8v8.500h-8z" stroke="#f3b52e" /><path d="M27.500 27h8v7.500h-8z" stroke="#5e9c39" /></g>
  </svg>
);

const TitleBar = () => (
  <div className="relative flex h-[30px] bg-white">
    <svg className="absolute top-[2px] left-[47px]" width="112" height="26" viewBox="0 0 112 26"><path d="M0.500 0.500H97a12.500 12.500 0 0 1 0 25H10.500C10.500 14 7 5 0.500 0.500z" fill="#f1f3f6" stroke="#8d929b" /></svg>
    <div className="relative ml-[66px] flex h-[29px] w-[92px] items-center">
      <svg width="14" height="14" viewBox="0 0 14 14"><path d="M0 0h14v14H0z" fill="#3b3fa8" /><path d="M3 0.500h8v6H3z" fill="#eef3fc" /><path d="M4 9h7v5H4z" fill="#222" /><path d="M5 10h2v3H5z" fill="#fff" /></svg>
      <svg className="ml-[12px]" width="14" height="14" viewBox="0 0 14 14"><path d="M1.500 2v5.500H7M2.500 7C4 2 11 1 11.500 6c0 2-1 4-3.500 6" fill="none" stroke="#a5b3cc" strokeWidth="2.700" /></svg>
      <svg className="ml-[8px]" width="5" height="3"><path d="M0 0h5L2.500 3z" fill="#a8a8a8" /></svg>
      <svg className="ml-[11px]" width="13" height="14" viewBox="0 0 13 14"><path d="M1 1.500h5v5M3 4c-3 3-1 8.500 3.500 8.500S13 7 9 2.500" fill="none" stroke="#a5b3cc" strokeWidth="2.600" /></svg>
    </div>
    <svg className="mt-[11px] ml-[8px]" width="6" height="9"><path d="M0 0h6v1.500H0zM0 4h6L3 8z" fill="#1d3f80" /></svg>
    <div className="absolute top-[5px] left-[831px] text-[14.500px] leading-[21px] text-[#222]"><Fit w={262}>MySQL class problem - Microsoft Word</Fit></div>
    <div className="absolute top-0 left-[1627px] flex h-[16px] w-[100px] items-center rounded-b-[4px] bg-[#24272c] pl-[3px] font-['Open_Sans',sans-serif] text-[16px] leading-[16px] text-[#e8e8e8]">
      <div className="mt-[2px] mr-[4px] h-[8px] w-[8px] rounded-full bg-[#f01616]" />
      <div className="-mt-[2px] flex"><Fit w={56}>screen</Fit><Fit w={27} className="font-bold">rec</Fit></div>
    </div>
    <svg className="absolute top-[7px] left-[1764px]" width="132" height="14" viewBox="0 0 132 14" fill="none" stroke="#111" strokeWidth="1.200"><path d="M1 6.500h12M59.500 4.500h9v9h-9zM61.500 4.500v-3h9v9h-2M118.500 1l12 12M130.500 1l-12 12" /></svg>
  </div>
);

export default function App() {
  return (
    <div className="relative h-[1080px] w-[1920px] overflow-hidden bg-white font-['Noto_Sans','Open_Sans',sans-serif]">
      <TitleBar />
      <div className="flex h-[29px] items-end border-b border-[#8db2e3] bg-[#bfdbff] pl-[59px] text-[13px] text-[#1c448e]">
        <div className="-mb-px flex h-[28px] w-[59px] items-center justify-center rounded-t-[4px] border border-b-0 border-[#91b6e8] bg-gradient-to-b from-[#f3f9ff] to-[#e0eafa] pr-[2px] pt-[2px] shadow-[inset_0_0_2px_#fff]"><Fit w={35}>Home</Fit></div>
        <div className="flex h-[28px] items-center pt-[5px] pl-[17px]">
          {tabs.map(([t, w, c]) => <div key={t} className={c}><Fit w={w}>{t}</Fit></div>)}
        </div>
        <svg className="mr-[6px] mb-[7px] ml-auto" width="14" height="14" viewBox="0 0 14 14"><circle cx="7" cy="7" r="6.300" fill="#2a62c8" stroke="#e8f0fc" strokeWidth="1.300" /><circle cx="7" cy="7" r="6.700" fill="none" stroke="#5574a8" strokeWidth="0.600" /><text x="4" y="11" fontFamily="Liberation Sans" fontWeight="bold" fontSize="11" fill="#fff">?</text></svg>
      </div>
      <div className="flex h-[110px] gap-[3px] rounded-b-[4px] border-x border-b border-[#8fb4dd] bg-gradient-to-b from-[#dbe5f1] from-0% via-[#cfdeef] via-30% to-[#e0f4fd] pt-[2px] pl-[3px] shadow-[inset_0_-2px_0_#d8f3ff]">
        <Group label="Clipboard" lw={58} launcher className="w-[173px]"><ClipboardGroup /></Group>
        <Group label="Font" lw={25} launcher className="w-[302px]"><FontGroup /></Group>
        <Group label="Paragraph" lw={61} launcher className="w-[240px]"><ParagraphGroup /></Group>
        <Group label="Styles" lw={33} launcher className="w-[1050px]"><StylesGroup /></Group>
        <Group label="Editing" lw={40} className="w-[84px]"><EditingGroup /></Group>
      </div>
      <DocArea />
      <StatusBar />
      <Taskbar />
      <OfficeOrb />
    </div>
  );
}
